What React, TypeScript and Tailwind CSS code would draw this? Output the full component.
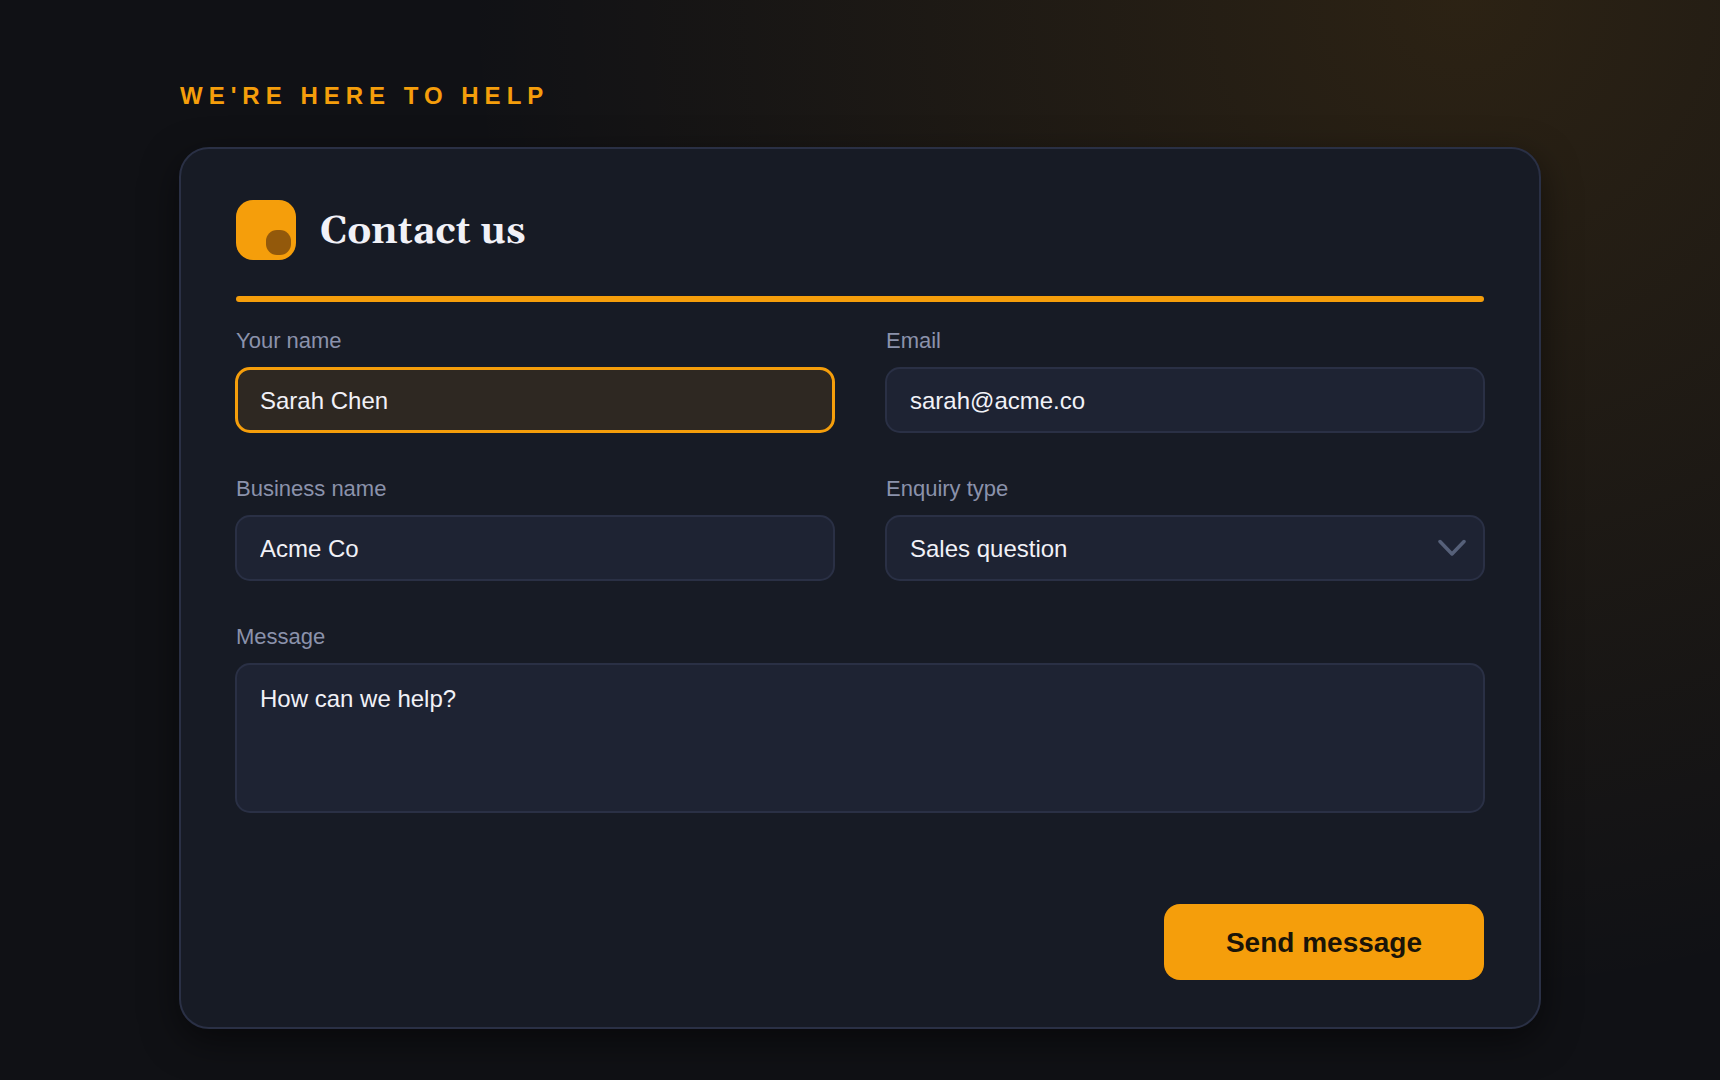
import { useState } from "react";
import type { ReactNode } from "react";

const control =
  "w-full rounded-[15px] border-2 border-[#2a3045] bg-[#1e2333] px-[23px] text-2xl leading-7 text-[#f1f1f7] outline-none";
const focused =
  "w-full rounded-[15px] border-3 border-[#f59e0b] bg-[#2e2822] px-[22px] text-2xl leading-7 text-[#f1f1f7] outline-none";

function Field({ id, label, wide, children }: { id: string; label: string; wide?: boolean; children: ReactNode }) {
  return (
    <div className={wide ? "flex flex-col gap-3 sm:col-span-2" : "flex flex-col gap-3"}>
      <label htmlFor={id} className="px-px text-[22px] leading-7 text-[#8b92ab]">
        {label}
      </label>
      {children}
    </div>
  );
}

function Logo() {
  return (
    <svg viewBox="0 0 60 60" className="size-[60px] shrink-0" aria-hidden="true">
      <rect width="60" height="60" rx="17" fill="#f59e0b" />
      <rect x="30" y="30" width="25" height="25" rx="11" fill="#93590b" />
    </svg>
  );
}

export default function App() {
  const [name, setName] = useState("Sarah Chen");
  const [email, setEmail] = useState("sarah@acme.co");
  const [business, setBusiness] = useState("Acme Co");
  const [message, setMessage] = useState("How can we help?");

  return (
    <main className="min-h-screen bg-[#101115] bg-[radial-gradient(circle_at_85%_0%,rgba(245,158,11,0.12),rgba(245,158,11,0)_55%)] px-6 pt-20 pb-[51px] font-['Liberation_Sans',Arial,sans-serif] lg:px-[179px]">
      <p className="px-px text-2xl leading-8 font-bold tracking-[6px] text-[#f59e0b]">WE'RE HERE TO HELP</p>

      <section className="mt-[35px] rounded-[30px] border-2 border-[#2a3045] bg-[#171b25] px-[54px] pt-[51px] pb-[47px] shadow-[0_12px_36px_rgba(0,0,0,0.5)]">
        <header className="flex items-center gap-6 px-px">
          <Logo />
          <h1 className="pt-1 font-[Georgia,Gelasio,'Liberation_Serif',serif] text-[38px] leading-10 font-bold text-[#f1f1f7]">
            Contact us
          </h1>
        </header>
        <div className="mx-px mt-9 h-1.5 rounded-[3px] bg-[#f59e0b]" />

        <form className="mt-[25px]" onSubmit={(e) => e.preventDefault()}>
          <div className="grid gap-x-[50px] gap-y-[42px] sm:grid-cols-2">
            <Field id="name" label="Your name">
              <input id="name" className={`${focused} h-[66px] pt-0.5`} value={name} onChange={(e) => setName(e.target.value)} />
            </Field>
            <Field id="email" label="Email">
              <input id="email" type="email" className={`${control} h-[66px] pt-0.5`} value={email} onChange={(e) => setEmail(e.target.value)} />
            </Field>
            <Field id="business" label="Business name">
              <input id="business" className={`${control} h-[66px] pt-0.5`} value={business} onChange={(e) => setBusiness(e.target.value)} />
            </Field>
            <Field id="enquiry" label="Enquiry type">
              <div className="relative">
                <select id="enquiry" className={`${control} h-[66px] appearance-none pt-0.5`}>
                  <option>Sales question</option>
                </select>
                <svg
                  viewBox="0 0 28 20"
                  className="pointer-events-none absolute top-[23px] right-[19px] h-5 w-7"
                  fill="none"
                  stroke="#566079"
                  strokeWidth="3.5"
                  strokeLinecap="round"
                  strokeLinejoin="round"
                  aria-hidden="true"
                >
                  <path d="M2 3.5 L14 16 L26 3.5" />
                </svg>
              </div>
            </Field>
            <Field id="message" label="Message" wide>
              <textarea
                id="message"
                className={`${control} block h-[150px] resize-none py-5`}
                value={message}
                onChange={(e) => setMessage(e.target.value)}
              />
            </Field>
          </div>
          <div className="mt-[91px] flex justify-end px-px">
            <button type="submit" className="h-[76px] w-80 rounded-2xl bg-[#f59e0b] pt-0.5 text-[28px] leading-8 font-bold text-[#1a1408]">
              Send message
            </button>
          </div>
        </form>
      </section>
    </main>
  );
}
